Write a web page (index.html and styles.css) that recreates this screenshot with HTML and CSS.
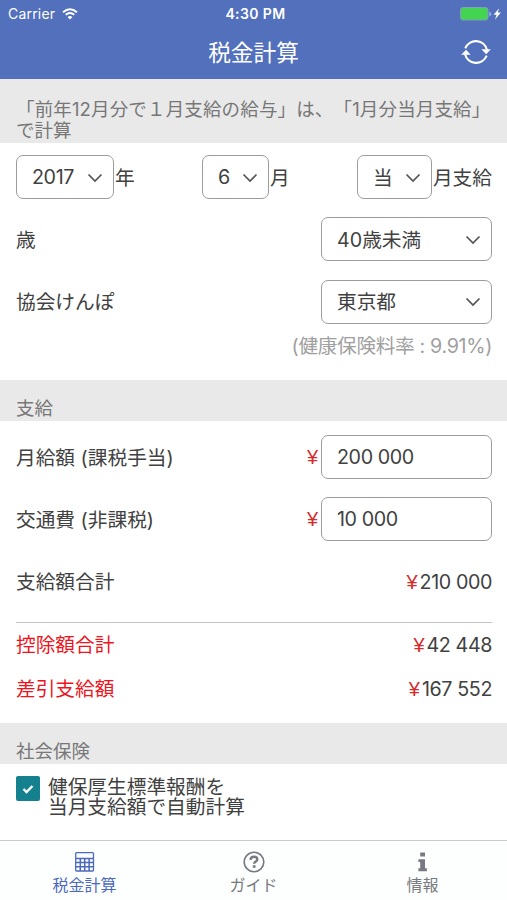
FILE: index.html
```html
<!DOCTYPE html>
<html lang="ja">
<head>
<meta charset="utf-8">
<title>税金計算</title>
<link rel="stylesheet" href="styles.css">
</head>
<body>
<header class="header">
  <div class="status">
    <div class="carrier"><span>Carrier</span>
      <svg width="16" height="12" viewBox="0 0 16 12" fill="none" stroke="#fff" stroke-width="1.9"><path d="M1 4.2Q8-1.8 15 4.2M3.7 6.8Q8 3.2 12.3 6.8"/><path d="M5.6 8.9Q8 7 10.4 8.9L8 11.5Z" fill="#fff" stroke="none"/></svg>
    </div>
    <div class="clock">4:30 PM</div>
    <div class="power">
      <svg width="42" height="14" viewBox="0 0 42 14"><rect x=".5" y=".5" width="27.5" height="12.5" rx="2.5" fill="#43d551" stroke="#7d9fc0"/><path d="M29.3 4.5v5q2-.8 2-2.5t-2-2.5Z" fill="#9cb4df"/><path d="M39.2 1.2 33.6 7.8h3L35 12.4l5.9-6.9h-3.2Z" fill="#fff"/></svg>
    </div>
  </div>
  <div class="navbar">
    <h1>税金計算</h1>
    <svg class="refresh" width="30" height="28" viewBox="0 0 30 28" fill="none" stroke="#fff" stroke-width="2.1"><path d="M4.3 10.3A11.4 11.4 0 0 1 26 12M25.7 17.7A11.4 11.4 0 0 1 4 16"/><path d="M20.4 11.2h9.4l-4.6 5ZM.2 16.8h9.4l-4.5-5Z" fill="#fff" stroke="none"/></svg>
  </div>
</header>

<main class="content">
  <div class="band notice"><span class="lead">「前年12月分で１月支給の給与」は、「1月分当月支給」</span><br>で計算</div>
  <section class="settings">
    <div class="row">
      <div class="group"><div class="select year"><span class="num">2017</span><svg class="chevron" viewBox="0 0 16 10"><path d="m1.5 1.5 6.5 6.5 6.5-6.5"/></svg></div><span class="label">年</span></div>
      <div class="group"><div class="select month"><span class="num">6</span><svg class="chevron" viewBox="0 0 16 10"><path d="m1.5 1.5 6.5 6.5 6.5-6.5"/></svg></div><span class="label">月</span></div>
      <div class="group"><div class="select timing"><span class="label">当</span><svg class="chevron" viewBox="0 0 16 10"><path d="m1.5 1.5 6.5 6.5 6.5-6.5"/></svg></div><span class="label">月支給</span></div>
    </div>
    <div class="row"><span class="label">歳</span><div class="select wide"><span class="label">40歳未満</span><svg class="chevron" viewBox="0 0 16 10"><path d="m1.5 1.5 6.5 6.5 6.5-6.5"/></svg></div></div>
    <div class="row"><span>協会けんぽ</span><div class="select wide"><span>東京都</span><svg class="chevron" viewBox="0 0 16 10"><path d="m1.5 1.5 6.5 6.5 6.5-6.5"/></svg></div></div>
    <div class="rate">(健康保険料率 : 9.91%)</div>
  </section>

  <div class="band title">支給</div>
  <section class="pay">
    <div class="row"><span class="label">月給額 (課税手当)</span><div class="money"><span class="yen">¥</span><input class="amount num" type="text" value="200 000"></div></div>
    <div class="row"><span class="label">交通費 (非課税)</span><div class="money"><span class="yen">¥</span><input class="amount num" type="text" value="10 000"></div></div>
    <div class="row"><span>支給額合計</span><div class="money"><span class="yen">¥</span><span class="num">210 000</span></div></div>
    <div class="totals">
      <div class="row"><span class="red">控除額合計</span><div class="money"><span class="yen">¥</span><span class="num">42 448</span></div></div>
      <div class="row"><span class="red">差引支給額</span><div class="money"><span class="yen">¥</span><span class="num">167 552</span></div></div>
    </div>
  </section>

  <div class="band title">社会保険</div>
  <section class="insurance">
    <span class="checkbox"><svg width="12" height="10" viewBox="0 0 12 10"><path d="m1.5 5 3 3 6-6"/></svg></span>
    <div class="option">健保厚生標準報酬を<br>当月支給額で自動計算</div>
  </section>
</main>

<nav class="tabs">
  <div class="tab active">
    <svg width="20" height="20" viewBox="0 0 20 20" fill="none" stroke="currentColor"><rect x=".7" y=".7" width="17.8" height="18.3" rx="1" stroke-width="1.3"/><path d="M1 6.5h17.5M1 10.5h17.5M1 14.7h17.5M5.3 6.5V19M9.7 6.5V19M14.1 6.5V19" stroke-width="1.5"/></svg>
    <span>税金計算</span>
  </div>
  <div class="tab">
    <svg width="22" height="22" viewBox="0 0 22 22" fill="none" stroke="currentColor"><circle cx="11" cy="11" r="9.8" stroke-width="1.6"/><path d="M7.5 8.8Q7.8 5.8 11 5.8q3.3 0 3.3 2.6c0 2.2-3.2 2-3.2 4.4" stroke-width="2.4"/><path d="M9.8 14.2h2.7v2.6H9.8z" fill="currentColor" stroke="none"/></svg>
    <span>ガイド</span>
  </div>
  <div class="tab">
    <svg width="10" height="20" viewBox="0 0 10 20" fill="currentColor"><path d="M2.2.5h4.8v4H2.2ZM.4 7.2H7v9h1.9V19.2H.4v-3h1.8V10H.4Z"/></svg>
    <span>情報</span>
  </div>
</nav>
</body>
</html>
```

FILE: styles.css
```css
* { box-sizing: border-box; }
body {
  margin: 0;
  height: 900px;
  overflow: hidden;
  display: flex;
  flex-direction: column;
  background: #fff;
  color: #414141;
  font: 19.7px/22px Inter, "Noto Sans CJK JP", sans-serif;
  text-spacing-trim: space-all;
}
.header {
  height: 79px;
  background: #5270bc;
  color: #fff;
}
.status {
  display: grid;
  grid-template-columns: 1fr auto 1fr;
  align-items: center;
  height: 27px;
  padding: 0 5px 0 8px;
  font-size: 14px;
}
.carrier { display: flex; align-items: center; gap: 7px; letter-spacing: .2px; }
.clock { font-weight: 600; letter-spacing: .4px; margin-left: 1px; }
.power { display: flex; justify-content: flex-end; }
.navbar {
  display: grid;
  grid-template-columns: 1fr auto 1fr;
  align-items: center;
  height: 50px;
  padding: 0 16px;
}
h1 { grid-column: 2; margin: 2px 0 0; font-size: 22.7px; font-weight: 400; line-height: 30px; }
.refresh { justify-self: end; }
.content { flex: 1; }
.band { background: #e9e9e9; color: #777; font-size: 18.5px; padding: 0 16px; }
.notice { height: 64px; padding-top: 20px; line-height: 20.5px; white-space: nowrap; }
.lead { letter-spacing: .15px; }
.title { height: 41px; padding-top: 17px; }
.settings { height: 237px; padding: 12px 15px 0 16px; }
.row { display: flex; align-items: center; justify-content: space-between; height: 44px; margin-bottom: 18.4px; }
.group, .money { display: flex; align-items: center; }
.label { padding-top: 2px; }
.num { letter-spacing: -.4px; }
.select, .amount {
  height: 44px;
  border: 1.5px solid #9c9c9c;
  border-radius: 7px;
  background: #fff;
  padding: 0 10px 0 15px;
}
.select { display: flex; align-items: center; justify-content: space-between; }
.year { width: 98px; margin-right: 1px; }
.month { width: 67px; margin-right: 1px; }
.timing { width: 75px; margin-right: 1px; }
.wide { width: 171px; }
.chevron { width: 16px; height: 10px; margin-top: 1px; fill: none; stroke: #555; stroke-width: 1.7; }
.rate { margin-top: -7px; text-align: right; color: #a0a0a0; letter-spacing: -.35px; }
.pay { height: 302px; padding: 14px 15px 0 16px; }
.amount { width: 171px; margin-left: 3px; color: inherit; font: inherit; letter-spacing: -.4px; }
.yen { color: #d22d2d; margin-right: 2px; font-family: "Liberation Sans", sans-serif; font-size: 20px; }
.money .yen:has(+ .amount) { margin-right: 0; }
.totals { border-top: 1.5px solid #c4c4c4; }
.totals .row { margin: 0; }
.red { color: #ed1420; }
.insurance { display: flex; align-items: flex-start; gap: 8px; padding: 12px 16px 0; line-height: 20px; }
.option { padding-top: 1px; }
.checkbox { display: flex; align-items: center; justify-content: center; width: 24px; height: 25px; border-radius: 2px; background: #15818f; }
.checkbox path { fill: none; stroke: #fff; stroke-width: 2.4; }
.tabs { display: grid; grid-template-columns: repeat(3, 1fr); height: 60px; border-top: 1px solid #c9cbcb; background: #fdfefe; }
.tab { display: flex; flex-direction: column; align-items: center; gap: 1px; color: #777a80; font-size: 16px; padding-top: 10px; }
.tab svg { height: 22px; }
.tab.active { color: #4c69bb; }
```
